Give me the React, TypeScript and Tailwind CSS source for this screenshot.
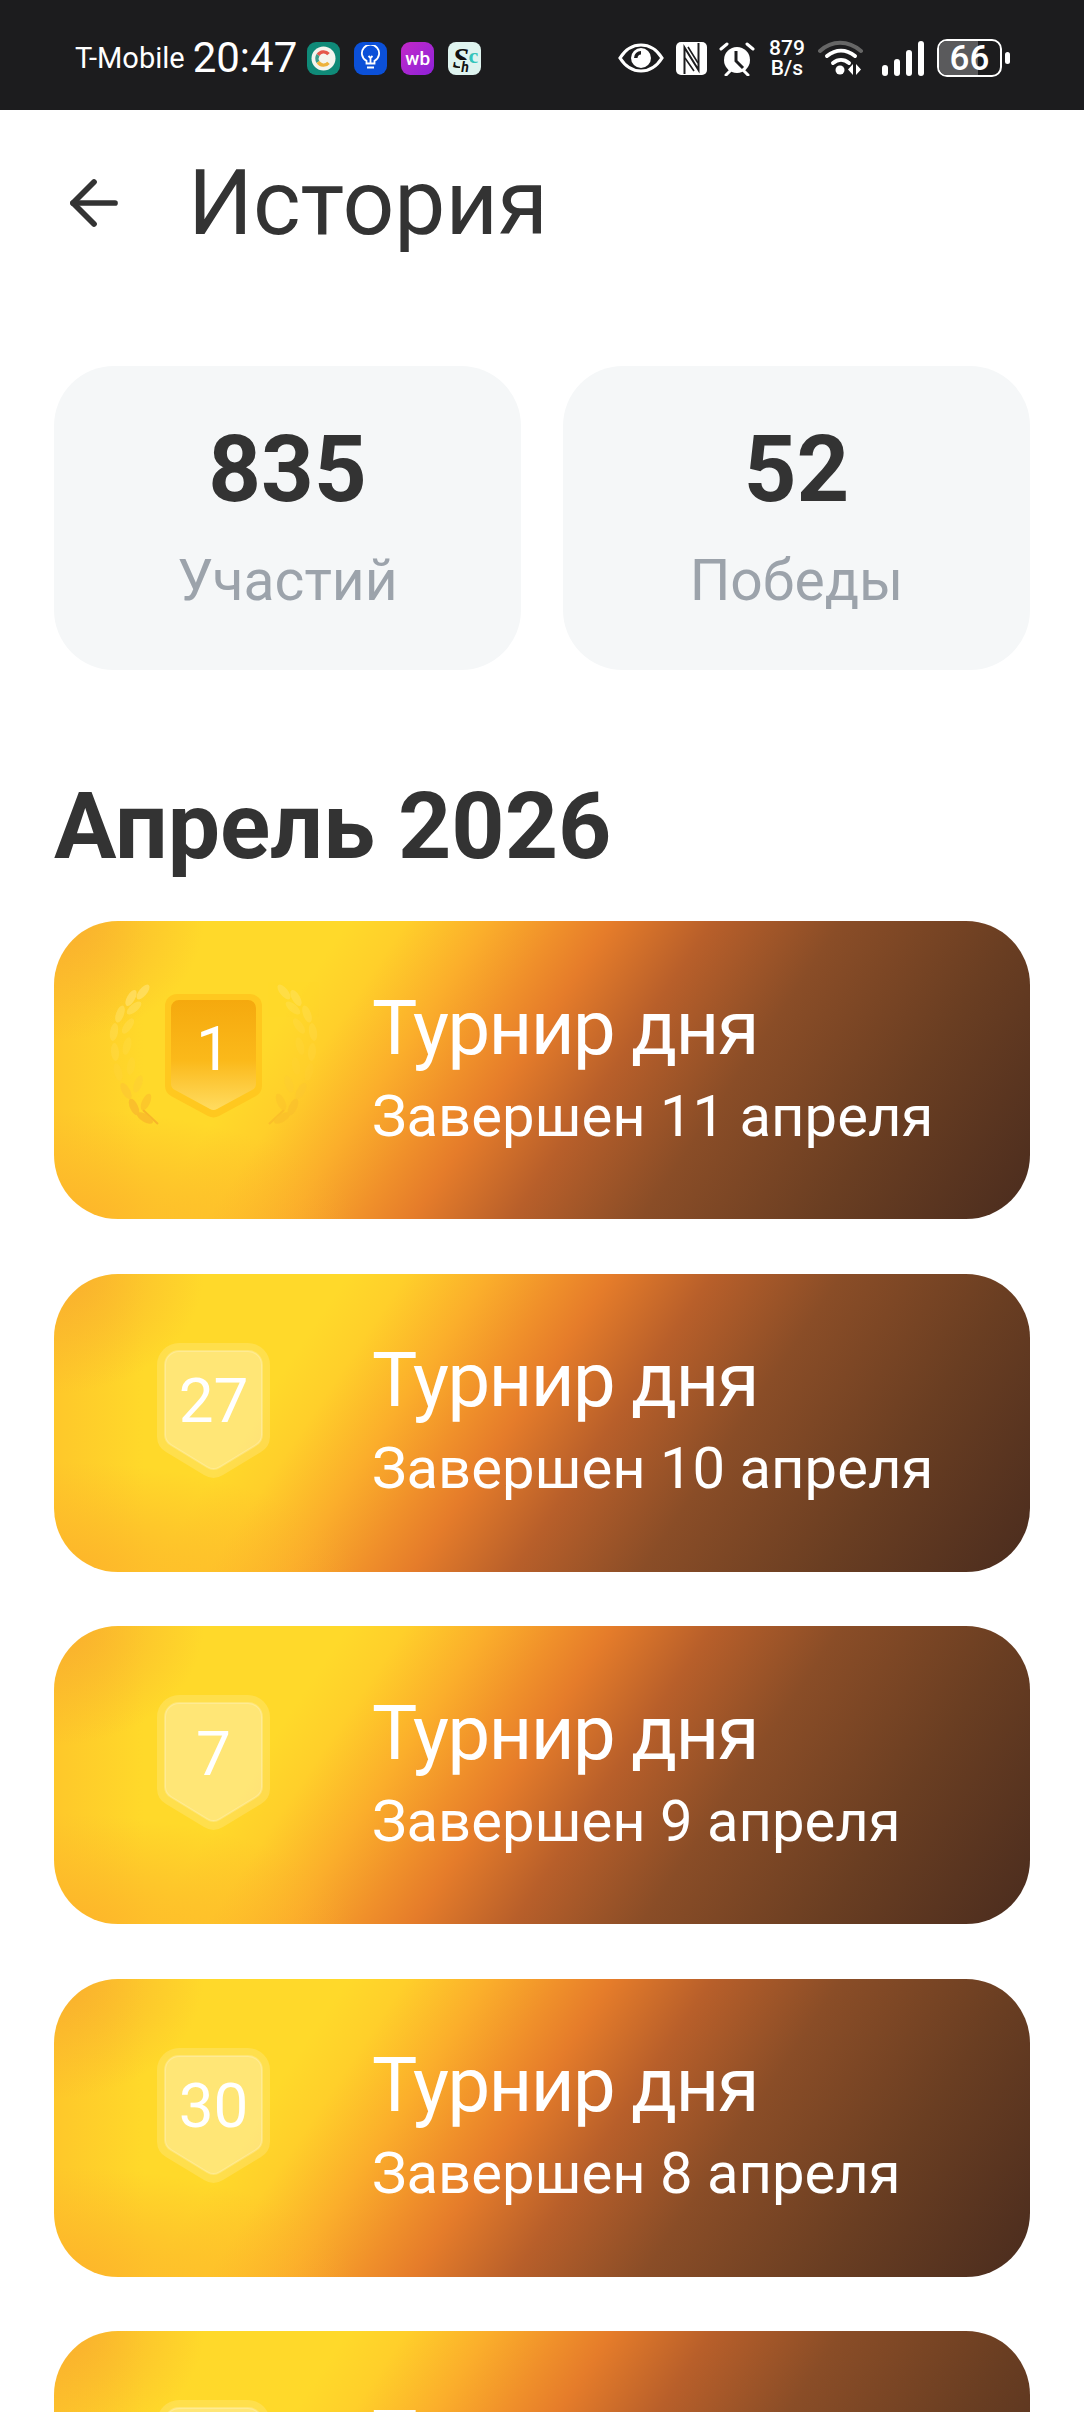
import React from 'react';
import { ArrowLeft } from 'lucide-react';

type Tournament = {
  place: number;
  date: string;
};

const tournaments: Tournament[] = [
  { place: 1, date: 'Завершен 11 апреля' },
  { place: 27, date: 'Завершен 10 апреля' },
  { place: 7, date: 'Завершен 9 апреля' },
  { place: 30, date: 'Завершен 8 апреля' },
  { place: 12, date: 'Завершен 7 апреля' },
];

const AppIcons: React.FC = () => (
  <div className="flex items-center gap-[14px] ml-[10px]">
    <div className="w-[33px] h-[33px] rounded-[9px] bg-[#0f8a78] flex items-center justify-center">
      <svg width="25" height="25" viewBox="0 0 25 25">
        <circle cx="12.5" cy="12.5" r="12" fill="#f4f4ee" />
        <path d="M17.5 8.2A6.5 6.5 0 0 0 7 9" fill="none" stroke="#e5574b" strokeWidth="3.4" />
        <path d="M7 9a6.5 6.5 0 0 0 0 7" fill="none" stroke="#3f9e8c" strokeWidth="3.4" />
        <path d="M7 16a6.5 6.5 0 0 0 10.5 .8" fill="none" stroke="#edb23c" strokeWidth="3.4" />
      </svg>
    </div>
    <div className="w-[33px] h-[33px] rounded-[9px] bg-[#0b50d8] flex items-center justify-center">
      <svg width="23" height="26" viewBox="0 0 23 26" fill="none" stroke="#fff" strokeWidth="1.8">
        <path d="M7.5 18.5v-2.6A8.6 8.6 0 1 1 15.5 15.9v2.6z" />
        <path d="M8 22.5h7M9.5 11l2 2 2-2M11.5 13v5" />
      </svg>
    </div>
    <div className="w-[33px] h-[33px] rounded-[9px] bg-gradient-to-br from-[#c326c9] to-[#8e1fd8] flex items-center justify-center text-white text-[19px] font-medium leading-none">
      wb
    </div>
    <div className="w-[33px] h-[33px] rounded-[8px] bg-[#def3ef] relative overflow-hidden flex items-center justify-center">
      <span className="text-[30px] font-bold italic leading-none text-[#111] font-['Liberation_Serif',serif] -ml-[8px]">S</span>
      <span className="absolute right-[3px] top-[3px] text-[22px] font-bold leading-none text-[#35c4bb] font-['Liberation_Serif',serif]">c</span>
      <span className="absolute left-[12px] bottom-[1px] text-[14px] font-bold italic leading-none text-[#111] bg-[#def3ef] px-[1px]">h</span>
    </div>
  </div>
);

const StatusRight: React.FC = () => (
  <div className="flex items-center ml-auto mr-[74px] text-white">
    <svg width="46" height="32" viewBox="0 0 46 32" className="mr-[12px]">
      <path d="M2 16C8 6.5 15 3 23 3s15 3.500 21 13c-6 9.500-13 13-21 13S8 25.500 2 16z" fill="none" stroke="#fff" strokeWidth="3.2" />
      <circle cx="23" cy="16" r="10" fill="#fff" />
      <path d="M23 9a7 7 0 0 0-7 7h3.500a4 4 0 0 1 3.500-3.500z" fill="#1c1c1e" />
    </svg>
    <svg width="31" height="33" viewBox="0 0 31 33" className="mr-[12px]">
      <rect x="0" y="0" width="31" height="33" rx="5" fill="#fff" />
      <path d="M8.500 32V5.500L22.500 28V1" fill="none" stroke="#1c1c1e" strokeWidth="2" />
      <path d="M12 5l10 16M9 16l9 13" fill="none" stroke="#1c1c1e" strokeWidth="1.600" />
    </svg>
    <svg width="36" height="35" viewBox="0 0 36 35" className="mr-[14px]">
      <circle cx="18" cy="19" r="13" fill="#fff" />
      <path d="M17 10v10l7 7" fill="none" stroke="#1c1c1e" strokeWidth="3" />
      <path d="M2 8l6-5M34 8l-6-5M7 34l4-4M29 34l-4-4" stroke="#fff" strokeWidth="3" strokeLinecap="round" />
    </svg>
    <div className="w-[36px] flex flex-col items-center text-[21px] leading-[20px] font-medium mr-[13px]">
      <span>879</span>
      <span>B/s</span>
    </div>
    <svg width="46" height="36" viewBox="0 0 46 36" className="mr-[18px]">
      <path d="M2 11C14 0 30 0 43 11" fill="none" stroke="#666" strokeWidth="4" strokeLinecap="round" />
      <path d="M9 16c9-7 19-7 28 0" fill="none" stroke="#fff" strokeWidth="4" strokeLinecap="round" />
      <path d="M15 23c5-4 11-4 16 0" fill="none" stroke="#fff" strokeWidth="4" strokeLinecap="round" />
      <circle cx="22" cy="30" r="4.500" fill="#fff" />
      <path d="M35 24v11l-5-5.500zM38 35V24l5 5.500z" fill="#fff" />
    </svg>
    <div className="flex items-end gap-[6px] h-[35px] mr-[13px]">
      <div className="w-[6px] h-[11px] rounded-full bg-white" />
      <div className="w-[6px] h-[17px] rounded-full bg-white" />
      <div className="w-[6px] h-[26px] rounded-full bg-white" />
      <div className="w-[6px] h-[35px] rounded-full bg-white" />
    </div>
    <div className="relative w-[65px] h-[38px] rounded-[10px] border-[2.5px] border-white overflow-hidden">
      <div className="h-full w-[64%] bg-[#5a5a5c]" />
      <span className="absolute inset-0 flex items-center justify-center text-[35px] font-medium leading-none">66</span>
    </div>
    <div className="w-[5px] h-[12px] rounded-full bg-white ml-[3px]" />
  </div>
);

const leaves = [
  [38, 140, 30, '#f9bb2a', 0.9],
  [27, 129, 65, '#f9bd2c', 0.9],
  [39, 124, -65, '#fbc02c', 0.7],
  [19, 113, 60, '#fbc534', 0.6],
  [31, 106, -70, '#fccb36', 0.4],
  [11, 94, 75, '#ffd545', 0.25],
  [24, 88, -80, '#ffd84a', 0.2],
  [8, 74, 85, '#ffdf5a', 0.3],
  [20, 68, -75, '#ffe060', 0.2],
  [7, 54, 100, '#ffe26a', 0.35],
  [21, 48, -55, '#ffe26a', 0.3],
  [13, 36, 110, '#ffe470', 0.45],
  [27, 30, -40, '#ffe470', 0.45],
  [24, 20, 120, '#ffe680', 0.55],
  [36, 14, -50, '#ffe680', 0.55],
] as const;

const Laurel: React.FC = () => (
  <svg width="70" height="150" viewBox="0 0 70 150">
    <path d="M51 146L36 132" fill="none" stroke="#f7b52a" strokeWidth="2" />
    {leaves.map(([x, y, r, c, o], i) => (
      <ellipse key={i} cx={x} cy={y} rx="9" ry="4" fill={c} opacity={o} transform={`rotate(${r} ${x} ${y})`} />
    ))}
  </svg>
);

const Shield: React.FC<{ place: number }> = ({ place }) => {
  const winner = place === 1;
  return (
    <div className="relative w-[113px] h-[135px] flex items-center justify-center">
      {winner ? (
        <>
          <div className="absolute left-[-50px] top-[-12px]">
            <Laurel />
          </div>
          <div className="absolute right-[-50px] top-[-12px] -scale-x-100 opacity-60">
            <Laurel />
          </div>
          <svg className="absolute inset-0" width="113" height="135" viewBox="0 0 113 135">
            <defs>
              <linearGradient id="gold" x1="0" y1="0" x2="0" y2="1">
                <stop offset="0" stopColor="#f5a90e" />
                <stop offset="0.55" stopColor="#fbb91a" />
                <stop offset="1" stopColor="#ffdc60" />
              </linearGradient>
            </defs>
            <path d="M20 4h73a12 12 0 0 1 12 12v80a12 12 0 0 1-6 10l-37 20a12 12 0 0 1-11 0l-37-20a12 12 0 0 1-6-10V16a12 12 0 0 1 12-12z" fill="#ffc81f" />
            <path d="M22 10h69a8 8 0 0 1 8 8v76a7 7 0 0 1-4 6l-35 19a7 7 0 0 1-7 0l-35-19a7 7 0 0 1-4-6V18a8 8 0 0 1 8-8z" fill="url(#gold)" />
          </svg>
        </>
      ) : (
        <svg className="absolute inset-0" width="113" height="135" viewBox="0 0 113 135">
          <path d="M22 0h69a22 22 0 0 1 22 22v72a18 18 0 0 1-9 15l-38 23a18 18 0 0 1-19 0L9 109a18 18 0 0 1-9-15V22A22 22 0 0 1 22 0z" fill="#ffffff" fillOpacity="0.16" />
          <path d="M22 8h69a14 14 0 0 1 14 14v70a12 12 0 0 1-6 10l-36 22a12 12 0 0 1-13 0L14 102a12 12 0 0 1-6-10V22A14 14 0 0 1 22 8z" fill="#ffffff" fillOpacity="0.24" stroke="#ffffff" strokeOpacity="0.22" strokeWidth="2" />
        </svg>
      )}
      <span className="relative text-white text-[62px] leading-none -mt-[18px]">{place}</span>
    </div>
  );
};

const TournamentCard: React.FC<Tournament> = ({ place, date }) => (
  <div className="shrink-0 h-[298px] rounded-[64px] flex items-center overflow-hidden bg-[radial-gradient(ellipse_150px_120px_at_0_0,#f9ae2e,rgba(249,174,46,0)),radial-gradient(ellipse_300px_110px_at_0_100%,#fdb42a,rgba(253,180,42,0)),linear-gradient(90deg,rgba(253,185,42,0.55),rgba(253,185,42,0)_90px),linear-gradient(124deg,#ffd92a_0%,#ffd92a_25%,#ffcf2a_30%,#fbae2b_37%,#f0902a_43%,#e57c2a_47.5%,#b85f2a_56%,#8a4d27_67%,#6a3e22_82%,#4a2c1e_100%)]">
    <div className="w-[318px] pl-[103px] shrink-0 mb-[25px]">
      <Shield place={place} />
    </div>
    <div className="flex flex-col mb-[8px]">
      <span className="text-white text-[76px] leading-[88px] tracking-[-1.6px]">Турнир дня</span>
      <span className="text-white text-[58px] leading-[66px] mt-[11px]">{date}</span>
    </div>
  </div>
);

const StatCard: React.FC<{ value: string; label: string }> = ({ value, label }) => (
  <div className="flex-1 h-[304px] rounded-[60px] bg-[#f5f7f8] flex flex-col items-center justify-center">
    <span className="text-[#333333] text-[92px] leading-[100px] font-bold">{value}</span>
    <span className="text-[#9ca3ab] text-[57px] leading-[72px] mt-[25px]">{label}</span>
  </div>
);

export default function App() {
  return (
    <div className="w-[1084px] h-[2412px] overflow-hidden bg-white font-['Roboto','Noto_Sans',sans-serif]">
      <div className="h-[110px] bg-[#1c1c1e] flex items-center pl-[75px] pt-[6px]">
        <span className="text-white text-[29px] leading-none mr-[8px]">T-Mobile</span>
        <span className="text-white text-[42px] leading-none">20:47</span>
        <AppIcons />
        <StatusRight />
      </div>

      <div className="h-[186px] flex items-center pl-[58px]">
        <ArrowLeft size={72} strokeWidth={1.9} className="text-[#333333]" />
        <h1 className="ml-[58px] text-[#333333] text-[91px] leading-none">История</h1>
      </div>

      <div className="mt-[70px] px-[54px] flex gap-[42px]">
        <StatCard value="835" label="Участий" />
        <StatCard value="52" label="Победы" />
      </div>

      <h2 className="mt-[107px] pl-[54px] h-[144px] text-[#333333] text-[93px] leading-[100px] font-bold">Апрель 2026</h2>

      <div className="px-[54px] flex flex-col gap-[54.5px]">
        {tournaments.map((t, i) => (
          <TournamentCard key={i} place={t.place} date={t.date} />
        ))}
      </div>
    </div>
  );
}
